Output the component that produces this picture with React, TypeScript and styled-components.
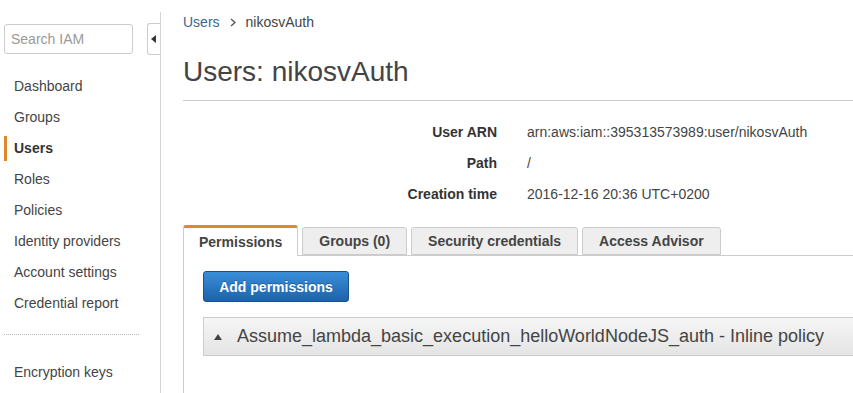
import React from 'react';
import styled, { createGlobalStyle } from 'styled-components';

const GlobalStyle = createGlobalStyle`
  html, body {
    margin: 0;
    padding: 0;
    background: #fff;
    overflow: hidden;
  }
  body {
    font-family: "Liberation Sans", Arial, sans-serif;
    font-size: 14px;
    color: #444;
  }
`;

const Page = styled.div`
  display: flex;
  width: 853px;
  height: 393px;
  overflow: hidden;
`;

const Sidebar = styled.aside`
  flex: 0 0 161px;
  margin-top: 12px;
  border-right: 1px solid #d5d5d5;
  box-sizing: border-box;
  width: 162px;
`;

const SearchRow = styled.div`
  display: flex;
  align-items: center;
  justify-content: space-between;
  padding: 11px 0 0 4px;
`;

const SearchInput = styled.input`
  width: 129px;
  height: 30px;
  box-sizing: border-box;
  border: 1px solid #ccc;
  border-radius: 3px;
  padding: 0 6px;
  font-family: "Liberation Sans", Arial, sans-serif;
  font-size: 14px;
  color: #444;
  outline: none;

  &::placeholder {
    color: #999;
  }
`;

const Toggle = styled.button`
  width: 13px;
  height: 32px;
  box-sizing: border-box;
  border: 1px solid #ccc;
  border-right: none;
  border-radius: 3px 0 0 3px;
  background: #fff;
  padding: 0;
  display: flex;
  align-items: center;
  justify-content: center;
`;

const Nav = styled.nav`
  display: flex;
  flex-direction: column;
  gap: 6px;
  margin-top: 19px;
`;

const NavItem = styled.a<{ $active?: boolean }>`
  display: block;
  height: 25px;
  line-height: 25px;
  margin-left: 4px;
  padding-left: 7px;
  border-left: 3px solid ${p => (p.$active ? '#dd8a2b' : 'transparent')};
  color: ${p => (p.$active ? '#333' : '#444')};
  font-weight: ${p => (p.$active ? 'bold' : 'normal')};
  text-decoration: none;
  white-space: nowrap;
`;

const Separator = styled.div`
  margin: 12px 0 19px 4px;
  width: 135px;
  border-top: 1px dotted #bbb;
`;

const Main = styled.main`
  flex: 1;
  padding: 12px 0 0 22px;
  min-width: 0;
`;

const Breadcrumb = styled.div`
  display: flex;
  align-items: center;
  height: 20px;
  font-size: 14px;
  color: #444;
`;

const CrumbLink = styled.a`
  color: #3e6592;
  text-decoration: none;
`;

const CrumbSep = styled.span`
  display: flex;
  margin: 0 10px 0 10px;
  color: #555;
`;

const Title = styled.h1`
  margin: 23px 0 0;
  font-size: 28px;
  line-height: 34px;
  font-weight: normal;
  color: #444;
`;

const Rule = styled.hr`
  margin: 11px 0 0;
  border: none;
  border-top: 1px solid #ccc;
`;

const Details = styled.dl`
  display: grid;
  grid-template-columns: 314px auto;
  column-gap: 30px;
  margin: 16px 0 0;
`;

const Label = styled.dt`
  text-align: right;
  font-weight: bold;
  color: #333;
  line-height: 31px;
`;

const Value = styled.dd`
  margin: 0;
  line-height: 31px;
  color: #444;
`;

const TabBar = styled.div`
  display: flex;
  align-items: flex-end;
  gap: 4px;
  margin-top: 15px;
  border-bottom: 1px solid #ccc;
  height: 30px;
`;

const Tab = styled.div<{ $active?: boolean }>`
  box-sizing: border-box;
  height: ${p => (p.$active ? '31px' : '28px')};
  margin-bottom: ${p => (p.$active ? '-1px' : '0')};
  padding: 0 ${p => (p.$active ? '15px' : '16px')} 1px;
  display: flex;
  align-items: center;
  font-weight: bold;
  color: #444;
  background: ${p => (p.$active ? '#fff' : '#eee')};
  border: 1px solid #ccc;
  border-bottom: ${p => (p.$active ? 'none' : '1px solid #ccc')};
  border-top: ${p => (p.$active ? '3px solid #dd8a2b' : '1px solid #ccc')};
  border-radius: 3px 3px 0 0;
  white-space: nowrap;
`;

const Panel = styled.div`
  border-left: 1px solid #ccc;
  padding: 15px 0 60px 19px;
  margin-right: -40px;
`;

const PrimaryButton = styled.button`
  height: 31px;
  width: 146px;
  box-sizing: border-box;
  border: 1px solid #1b4f88;
  border-radius: 3px;
  background: linear-gradient(#3a8ed8, #1d62ad);
  color: #fff;
  font-family: "Liberation Sans", Arial, sans-serif;
  font-size: 14px;
  font-weight: bold;
  text-shadow: 0 -1px 0 rgba(0, 0, 0, 0.25);
`;

const PolicyRow = styled.div`
  display: flex;
  align-items: center;
  gap: 15px;
  margin-top: 15px;
  height: 39px;
  box-sizing: border-box;
  padding-left: 10px;
  border: 1px solid #ccc;
  background: linear-gradient(#f6f6f6, #e4e4e4);
  font-size: 18px;
  color: #444;
  white-space: nowrap;
`;

const navItems = [
  'Dashboard',
  'Groups',
  'Users',
  'Roles',
  'Policies',
  'Identity providers',
  'Account settings',
  'Credential report',
];

const tabs = ['Permissions', 'Groups (0)', 'Security credentials', 'Access Advisor'];

const details = [
  ['User ARN', 'arn:aws:iam::395313573989:user/nikosvAuth'],
  ['Path', '/'],
  ['Creation time', '2016-12-16 20:36 UTC+0200'],
];

const App: React.FC = () => {
  return (
    <>
      <GlobalStyle />
      <Page>
        <Sidebar>
          <SearchRow>
            <SearchInput placeholder="Search IAM" />
            <Toggle aria-label="Collapse">
              <svg width="6" height="8" viewBox="0 0 6 8">
                <polygon points="5,0 5,8 0,4" fill="#333" />
              </svg>
            </Toggle>
          </SearchRow>
          <Nav>
            {navItems.map(item => (
              <NavItem key={item} $active={item === 'Users'}>
                {item}
              </NavItem>
            ))}
            <Separator />
            <NavItem>Encryption keys</NavItem>
          </Nav>
        </Sidebar>

        <Main>
          <Breadcrumb>
            <CrumbLink>Users</CrumbLink>
            <CrumbSep>
              <svg width="6" height="9" viewBox="0 0 6 9">
                <polyline points="1,1 5,4.5 1,8" fill="none" stroke="#555" strokeWidth="1.3" />
              </svg>
            </CrumbSep>
            <span>nikosvAuth</span>
          </Breadcrumb>
          <Title>Users: nikosvAuth</Title>
          <Rule />

          <Details>
            {details.map(([label, value]) => (
              <React.Fragment key={label}>
                <Label>{label}</Label>
                <Value>{value}</Value>
              </React.Fragment>
            ))}
          </Details>

          <TabBar>
            {tabs.map(t => (
              <Tab key={t} $active={t === 'Permissions'}>
                {t}
              </Tab>
            ))}
          </TabBar>

          <Panel>
            <PrimaryButton>Add permissions</PrimaryButton>
            <PolicyRow>
              <svg width="8" height="6" viewBox="0 0 8 6">
                <polygon points="0,6 8,6 4,0" fill="#444" />
              </svg>
              <span>Assume_lambda_basic_execution_helloWorldNodeJS_auth - Inline policy</span>
            </PolicyRow>
          </Panel>
        </Main>
      </Page>
    </>
  );
};

export default App;
